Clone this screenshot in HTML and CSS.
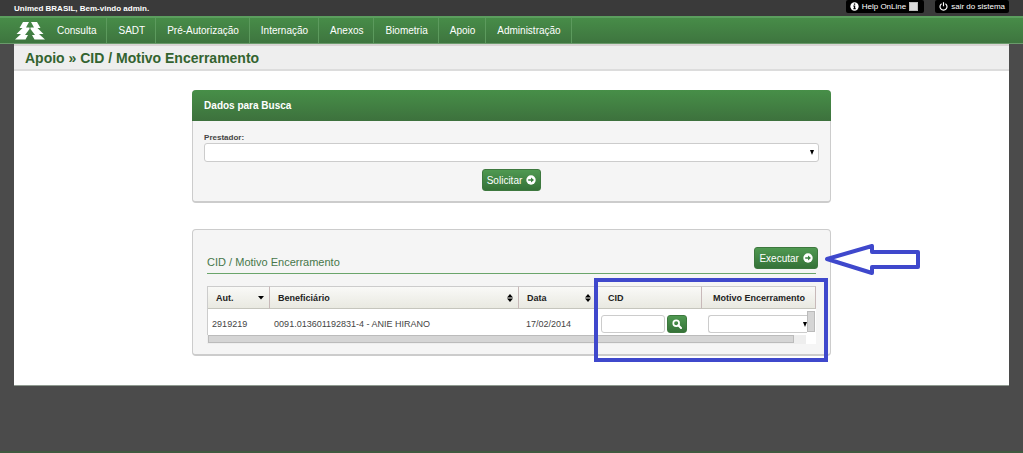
FILE: index.html
```html
<!DOCTYPE html>
<html lang="pt-BR">
<head>
<meta charset="utf-8">
<meta name="viewport" content="width=device-width, initial-scale=1">
<title>CID / Motivo Encerramento</title>
<link rel="stylesheet" href="styles.css">
</head>
<body>
<header class="topbar">
  <span class="welcome">Unimed BRASIL, Bem-vindo admin.</span>
  <div class="top-actions">
    <label class="pill">
      <svg class="pill-icon" viewBox="0 0 10 10" aria-hidden="true"><circle cx="5" cy="5" r="4.6" fill="#fff"/><path d="M4.3 1.7h1.5v1.4H4.3zM3.6 4h2.2v3h.7v1.1H3.6V7h.7V5h-.7z" fill="#000"/></svg>
      Help OnLine
      <input class="help-check" type="checkbox">
    </label>
    <a class="pill" href="#">
      <svg class="pill-icon" viewBox="0 0 10 10" aria-hidden="true"><path d="M2.9 1.9a3.9 3.9 0 1 0 4.2 0M5 .4v4.4" fill="none" stroke="#fff" stroke-width="1.3"/></svg>
      sair do sistema
    </a>
  </div>
</header>
<nav class="nav">
  <a class="logo" href="#" aria-label="Unimed">
    <svg class="logo-mark" viewBox="0 0 30 18" aria-hidden="true"><path fill="#fff" d="M8 0H14L11 5.500H14.500V7L10 13H13L10.500 17.500H0L6 12H1.500L7.500 6H4.500ZM22 0H16L19 5.500H15.500V7L20 13H17L19.500 17.500H30L24 12H28.500L22.500 6H25.500Z"/></svg>
  </a>
  <a class="nav-item" href="#">Consulta</a>
  <a class="nav-item" href="#">SADT</a>
  <a class="nav-item" href="#">Pré-Autorização</a>
  <a class="nav-item" href="#">Internação</a>
  <a class="nav-item" href="#">Anexos</a>
  <a class="nav-item" href="#">Biometria</a>
  <a class="nav-item" href="#">Apoio</a>
  <a class="nav-item" href="#">Administração</a>
</nav>
<main class="sheet">
  <h1 class="page-title">Apoio » CID / Motivo Encerramento</h1>
  <div class="content">
    <section class="panel">
      <h2 class="panel-head">Dados para Busca</h2>
      <form class="search">
        <label class="field-label" for="prestador">Prestador:</label>
        <span class="select-wrap"><select class="control" id="prestador"><option></option></select></span>
        <button class="button" type="button">Solicitar
          <svg class="button-icon" viewBox="0 0 10 10" aria-hidden="true"><circle cx="5" cy="5" r="4.700" fill="#fff"/><path d="M2.200 4.200H5V2.400L8 5 5 7.600V5.800H2.200z" fill="#3c8040"/></svg>
        </button>
      </form>
    </section>
    <section class="panel results">
      <div class="results-head">
        <h2 class="results-title">CID / Motivo Encerramento</h2>
        <button class="button" type="button">Executar
          <svg class="button-icon" viewBox="0 0 10 10" aria-hidden="true"><circle cx="5" cy="5" r="4.700" fill="#fff"/><path d="M2.200 4.200H5V2.400L8 5 5 7.600V5.800H2.200z" fill="#3c8040"/></svg>
        </button>
        <svg class="arrow" viewBox="0 0 98 34" aria-hidden="true"><path d="M5 17 50 4V10H96V25H50V31Z" fill="none" stroke="#3f48cc" stroke-width="4" stroke-linejoin="round"/></svg>
      </div>
      <div class="grid">
        <table class="table">
          <colgroup><col class="col-aut"><col><col class="col-date"><col class="col-cid"><col class="col-reason"></colgroup>
          <thead>
            <tr>
              <th><span class="th">Aut. <svg class="sort" viewBox="0 0 6 8" aria-hidden="true"><path d="M0 2H6L3 5.500z"/></svg></span></th>
              <th><span class="th">Beneficiário <svg class="sort" viewBox="0 0 6 8" aria-hidden="true"><path d="M0 3.500 3 0 6 3.500zM0 4.500H6L3 8z"/></svg></span></th>
              <th><span class="th">Data <svg class="sort" viewBox="0 0 6 8" aria-hidden="true"><path d="M0 3.500 3 0 6 3.500zM0 4.500H6L3 8z"/></svg></span></th>
              <th>CID</th>
              <th>Motivo Encerramento</th>
            </tr>
          </thead>
          <tbody>
            <tr>
              <td>2919219</td>
              <td>0091.013601192831-4 - ANIE HIRANO</td>
              <td class="date">17/02/2014</td>
              <td>
                <div class="cid">
                  <input class="control" type="text" aria-label="CID">
                  <button class="button lookup" type="button" aria-label="Buscar CID"><svg class="button-icon" viewBox="0 0 10 10" aria-hidden="true"><circle cx="4.200" cy="4.200" r="2.900" fill="none" stroke="#fff" stroke-width="1.700"/><path d="M6.300 6.300 9 9" stroke="#fff" stroke-width="2" stroke-linecap="round"/></svg></button>
                </div>
              </td>
              <td class="reason"><span class="select-wrap"><select class="control" aria-label="Motivo Encerramento"><option></option></select></span></td>
            </tr>
          </tbody>
        </table>
        <div class="vscroll"><div class="vthumb"></div></div>
        <div class="hscroll"><div class="hthumb"></div></div>
        <div class="highlight"></div>
      </div>
    </section>
  </div>
</main>
<footer class="footer"></footer>
</body>
</html>
```
FILE: styles.css
```css
* { box-sizing: border-box; }
body {
  margin: 0;
  min-height: 100vh;
  display: flex;
  flex-direction: column;
  background: #4b4b4b;
  color: #444;
  font-family: "Liberation Sans", Arial, sans-serif;
  font-size: 9px;
}
a { color: inherit; text-decoration: none; }
h1, h2 { margin: 0; }
svg { flex: none; }

.topbar {
  display: flex;
  justify-content: space-between;
  align-items: center;
  height: 16px;
  padding: 0 14px;
  background: #3a3a3a;
  color: #fff;
  font-size: 8px;
}
.welcome { font-weight: bold; }
.top-actions { display: flex; align-self: flex-start; gap: 11px; }
.pill {
  display: flex;
  align-items: center;
  gap: 3px;
  height: 13px;
  padding: 0 4px;
  border-radius: 2px;
  background: #000;
}
.pill-icon { width: 9px; height: 9px; }
.help-check {
  appearance: none;
  width: 9px;
  height: 9px;
  margin: 0 2px 0 0;
  background: #dcdcdc;
  border: 1px solid #bbb;
}

.nav {
  display: flex;
  height: 28px;
  padding-left: 15px;
  border-top: 2px solid #5b9e5e;
  border-bottom: 1px solid #6a9a6b;
  background: linear-gradient(#478c48, #3e753f);
  color: #fff;
  font-size: 10px;
}
.logo { display: flex; align-items: center; padding-right: 1px; }
.logo-mark { width: 30px; height: 18px; }
.nav-item {
  display: flex;
  align-items: center;
  padding: 0 10px 0 11px;
  border-right: 1px solid #5c9a5d;
}

.sheet {
  margin: 0 14px;
  padding-bottom: 29px;
  background: #fff;
  border-bottom: 1px solid #8f9a90;
}
.page-title {
  padding: 4px 11px 2px;
  border-top: 2px solid #d9d4d4;
  border-bottom: 2px solid #dcdcdc;
  background: #eee;
  color: #33632f;
  font-size: 14px;
  line-height: 17px;
}
.content {
  display: flex;
  flex-direction: column;
  gap: 26px;
  width: 64.2%;
  margin: 19px auto 0;
}
.panel {
  border: 1px solid #ccc;
  border-bottom-width: 2px;
  border-radius: 4px;
  background: #f5f5f5;
}
.panel-head {
  margin: -1px -1px 0;
  padding: 0 12px;
  border-radius: 4px 4px 0 0;
  background: linear-gradient(#478f48, #3d713d);
  color: #fff;
  font-size: 10px;
  line-height: 31px;
}
.search {
  display: flex;
  flex-direction: column;
  padding: 11px 11px 10px;
}
.field-label { font-size: 8px; font-weight: bold; line-height: 11px; }
.control {
  display: block;
  width: 100%;
  height: 19px;
  appearance: none;
  border: 1px solid #ccc;
  border-radius: 3px;
  background: #fff;
}
.select-wrap { display: block; position: relative; }
.select-wrap::after {
  content: "";
  position: absolute;
  right: 5px;
  top: 7px;
  border: solid transparent;
  border-width: 5px 2px 0;
  border-top-color: #000;
}
.button {
  display: flex;
  align-items: center;
  justify-content: center;
  align-self: center;
  gap: 4px;
  height: 22px;
  padding: 0 4px;
  border: 1px solid #3d783e;
  border-radius: 3px;
  background: linear-gradient(#4f9951, #357238);
  color: #fff;
  font: 10px "Liberation Sans", Arial, sans-serif;
}
.search .button { margin-top: 7px; }
.button-icon { width: 10px; height: 10px; }

.results { padding: 17px 14px 10px; }
.results-head {
  position: relative;
  display: flex;
  justify-content: space-between;
  align-items: center;
  height: 27px;
  margin-bottom: 12px;
  border-bottom: 1px solid #6aa56b;
}
.results-head .button { margin-right: -2px; align-self: flex-start; }
.results-title {
  padding-top: 3px;
  color: #47774a;
  font-size: 11px;
  font-weight: normal;
}
.arrow {
  position: absolute;
  left: calc(100% + 6px);
  top: -5px;
  width: 98px;
  height: 34px;
}
.grid { position: relative; }
.table {
  width: 100%;
  table-layout: fixed;
  border-collapse: separate;
  border-spacing: 0;
  border-left: 1px solid #ccc;
}
.col-aut { width: 62px; }
.col-date { width: 78px; }
.col-cid { width: 105px; }
.col-reason { width: 114px; }
.table th {
  height: 23px;
  padding: 0 8px;
  border-top: 1px solid #ccc;
  border-bottom: 1px solid #c5c5bd;
  border-right: 1px solid #c8b9b9;
  background: linear-gradient(#f9f9f7, #e9e9e1);
  color: #222;
  text-align: left;
  white-space: nowrap;
}
.table th:nth-child(n + 4) { padding-left: 11px; }
.th { display: flex; align-items: center; justify-content: space-between; margin-right: -3px; }
.sort { width: 6px; height: 8px; }
.table td { height: 26px; padding: 3px 4px 0; background: #fff; white-space: nowrap; }
.table td.date { padding-left: 7px; }
.cid { display: flex; gap: 2px; }
.table .control { height: 18px; }
.cid .control { width: 64px; }
.lookup { width: 20px; height: 18px; padding: 0; }
.table td.reason { padding: 3px 9px 0 6px; }
.reason .select-wrap::after { right: 0; }
.reason .control { border-right: 0; border-radius: 3px 0 0 3px; }
.vscroll {
  position: absolute;
  right: 0;
  top: 23px;
  bottom: 9px;
  width: 9px;
  background: #fff;
}
.vthumb { width: 8px; height: 21px; margin-top: 2px; border: 1px solid #bbb; background: #d5d5d5; }
.hscroll { height: 9px; border-right: 10px solid #fff; background: #eee; border-left: 1px solid #eee; }
.hthumb { width: 98%; height: 8px; border: 1px solid #bbb; background: #d5d5d5; }
.highlight {
  position: absolute;
  left: calc(100% - 222px);
  right: -12px;
  top: -8px;
  bottom: -18px;
  border: 4px solid #3f48cc;
}
.footer { height: 2px; margin-top: auto; background: #3f5a40; }
```
